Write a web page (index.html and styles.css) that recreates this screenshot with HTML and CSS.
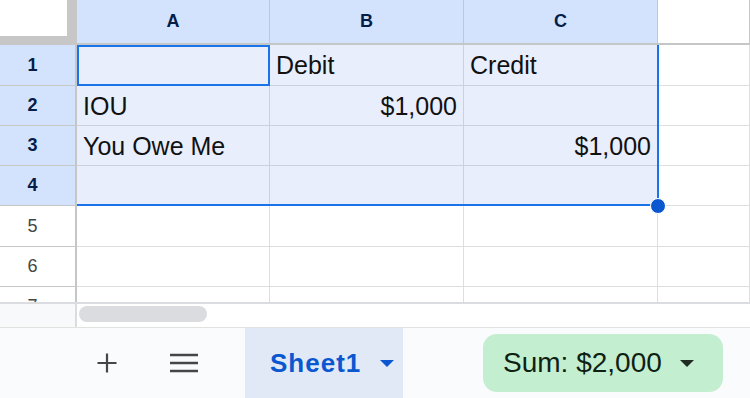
FILE: index.html
```html
<!DOCTYPE html>
<html lang="en">
<head>
    <meta charset="UTF-8">
    <title>Sheet1</title>
    <link rel="stylesheet" href="styles.css">
</head>
<body>

    <div class="sheet">
        <div class="grid">
            <div class="corner"></div>
            <div class="col-head sel-head">A</div>
            <div class="col-head sel-head">B</div>
            <div class="col-head sel-head">C</div>
            <div class="col-head"></div>

            <div class="row-head sel-head">1</div>
            <div class="cell sel"></div>
            <div class="cell sel">Debit</div>
            <div class="cell sel">Credit</div>
            <div class="cell"></div>

            <div class="row-head sel-head">2</div>
            <div class="cell sel">IOU</div>
            <div class="cell sel num">$1,000</div>
            <div class="cell sel"></div>
            <div class="cell"></div>

            <div class="row-head sel-head">3</div>
            <div class="cell sel">You Owe Me</div>
            <div class="cell sel"></div>
            <div class="cell sel num">$1,000</div>
            <div class="cell"></div>

            <div class="row-head sel-head">4</div>
            <div class="cell sel"></div>
            <div class="cell sel"></div>
            <div class="cell sel"></div>
            <div class="cell"></div>

            <div class="row-head">5</div>
            <div class="cell"></div>
            <div class="cell"></div>
            <div class="cell"></div>
            <div class="cell"></div>

            <div class="row-head">6</div>
            <div class="cell"></div>
            <div class="cell"></div>
            <div class="cell"></div>
            <div class="cell"></div>

            <div class="row-head">7</div>
            <div class="cell"></div>
            <div class="cell"></div>
            <div class="cell"></div>
            <div class="cell"></div>
        </div>

        <!-- selection outline A1:C4 and active cell -->
        <div class="range"></div>
        <div class="active"></div>
        <div class="handle"></div>
    </div>

    <div class="hscroll">
        <div class="hscroll-corner"></div>
        <div class="hscroll-track"><div class="thumb"></div></div>
    </div>

    <div class="tabbar">
        <div class="tab-tools">
            <svg class="tool" width="24" height="24" viewBox="0 0 24 24">
                <path d="M12 2.5v19M2.5 12h19" stroke="#444746" stroke-width="2.2" fill="none"/>
            </svg>
            <svg class="tool" width="28" height="20" viewBox="0 0 28 20">
                <path d="M0 2h28M0 10h28M0 18h28" stroke="#444746" stroke-width="2.4" fill="none"/>
            </svg>
        </div>
        <div class="tab">
            <span>Sheet1</span>
            <svg width="14" height="7" viewBox="0 0 14 7"><path d="M0 0h14L7 7z" fill="#0b57d0"/></svg>
        </div>
        <div class="sum">
            <span>Sum: $2,000</span>
            <svg width="14" height="7" viewBox="0 0 14 7"><path d="M0 0h14L7 7z" fill="#1f2a22"/></svg>
        </div>
    </div>

</body>
</html>
```

FILE: styles.css
```css
body {
    margin: 0;
    width: 750px;
    height: 398px;
    overflow: hidden;
    font-family: "Liberation Sans", Arial, sans-serif;
    background-color: #fff;
    display: flex;
    flex-direction: column;
}
.sheet {
    position: relative;
    height: 302px;
    overflow: hidden;
    flex: none;
}
.grid {
    display: grid;
    grid-template-columns: 77px 193px 194px 194px 1fr;
    grid-template-rows: 45px 41px 40px 40px 40px 41px 40px 40px;
}
.grid > div {
    box-sizing: border-box;
    border-right: 1px solid #dedede;
    border-bottom: 1px solid #dedede;
}
.corner {
    background-color: #fff;
    border-right: 10px solid #c7c7c7 !important;
    border-bottom: 9px solid #c7c7c7 !important;
}
.col-head {
    display: flex;
    align-items: center;
    justify-content: center;
    font-size: 18px;
    color: #444746;
    border-right-color: #c4c7c5 !important;
    border-bottom: 2px solid #c4c7c5 !important;
}
.row-head {
    display: flex;
    align-items: center;
    justify-content: center;
    padding-right: 10px;
    font-size: 18px;
    color: #444746;
    border-right: 2px solid #c4c7c5 !important;
    border-bottom-color: #c4c7c5 !important;
}
.sel-head {
    background-color: #d3e3fd;
    color: #041e49;
    font-weight: bold;
}
.cell {
    font-size: 25px;
    color: #111;
    line-height: 40px;
    padding: 0 6px;
    white-space: nowrap;
}
.cell.sel {
    background-color: #e8eefb;
    border-right-color: #cbd1dc;
    border-bottom-color: #cbd1dc;
}
.cell.num {
    text-align: right;
    padding-right: 6px;
}
.range {
    position: absolute;
    left: 77px;
    top: 45px;
    width: 582px;
    height: 161px;
    box-sizing: border-box;
    border-right: 2px solid #1a73e8;
    border-bottom: 2px solid #1a73e8;
}
.active {
    position: absolute;
    left: 77px;
    top: 45px;
    width: 193px;
    height: 41px;
    box-sizing: border-box;
    border: 2px solid #1a73e8;
}
.handle {
    position: absolute;
    left: 650px;
    top: 198px;
    width: 14px;
    height: 14px;
    border-radius: 50%;
    background-color: #0b57d0;
    border: 1.5px solid #fff;
}
.hscroll {
    display: grid;
    grid-template-columns: 77px 1fr;
    height: 25px;
    border-top: 2px solid #dadce0;
    box-sizing: border-box;
    flex: none;
}
.hscroll-corner {
    background-color: #f8f9fa;
    border-right: 2px solid #dadce0;
}
.hscroll-track {
    padding: 2px 0 0 2px;
}
.thumb {
    width: 128px;
    height: 16px;
    border-radius: 8px;
    background-color: #dadce0;
}
.tabbar {
    flex: 1;
    display: flex;
    align-items: stretch;
    background-color: #f9fbfd;
    border-top: 1px solid #e1e3e1;
}
.tab-tools {
    width: 245px;
    display: flex;
    align-items: center;
    gap: 51px;
    padding-left: 95px;
    box-sizing: border-box;
}
.tool {
    display: block;
}
.tab {
    width: 158px;
    background-color: #e1e9f7;
    display: flex;
    align-items: center;
    gap: 19px;
    padding-left: 25px;
    box-sizing: border-box;
    color: #0b57d0;
    font-size: 26px;
    font-weight: bold;
    letter-spacing: 1px;
}
.sum {
    margin: 6px 0 6px 80px;
    width: 240px;
    border-radius: 14px;
    background-color: #c4eed0;
    display: flex;
    align-items: center;
    gap: 18px;
    padding-left: 20px;
    box-sizing: border-box;
    color: #0f1f14;
    font-size: 28px;
}
```
